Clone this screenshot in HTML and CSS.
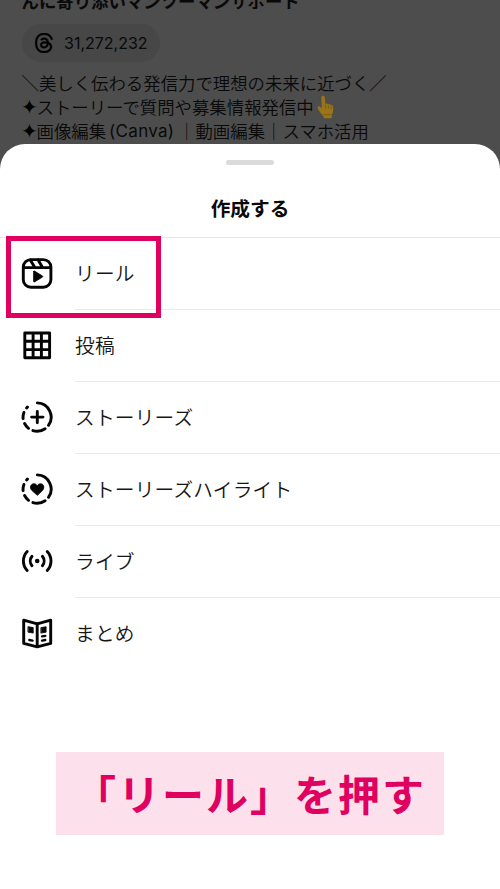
FILE: index.html
```html
<!DOCTYPE html>
<html lang="ja">
<head>
<meta charset="utf-8">
<title>作成する</title>
<link rel="stylesheet" href="styles.css">
</head>
<body>
<main class="screen">
  <section class="profile">
    <div class="headline">んに寄り添いマンツーマンサポート</div>
    <div class="threads-pill">
      <svg class="threads-logo" viewBox="0 0 24 24"><path d="M12.186 24h-.007c-3.581-.024-6.334-1.205-8.184-3.509C2.35 18.44 1.5 15.586 1.472 12.01v-.017c.03-3.579.879-6.43 2.525-8.482C5.845 1.205 8.6.024 12.18 0h.014c2.746.02 5.043.725 6.826 2.098 1.677 1.29 2.858 3.13 3.509 5.467l-2.04.569c-1.104-3.96-3.898-5.984-8.304-6.015-2.91.022-5.11.936-6.54 2.717C4.307 6.504 3.616 8.914 3.589 12c.027 3.086.718 5.496 2.057 7.164 1.43 1.783 3.631 2.698 6.54 2.717 2.623-.02 4.358-.631 5.8-2.045 1.647-1.613 1.618-3.593 1.09-4.798-.31-.71-.873-1.3-1.634-1.75-.192 1.352-.622 2.446-1.284 3.272-.886 1.102-2.14 1.704-3.73 1.79-1.202.065-2.361-.218-3.259-.801-1.063-.689-1.685-1.74-1.752-2.964-.065-1.19.408-2.285 1.33-3.082.88-.76 2.119-1.207 3.583-1.291a13.853 13.853 0 0 1 3.02.142c-.126-.742-.375-1.332-.75-1.757-.513-.586-1.308-.883-2.359-.89h-.029c-.844 0-1.992.232-2.721 1.32L7.734 7.847c.98-1.454 2.568-2.256 4.478-2.256h.044c3.194.02 5.097 1.975 5.287 5.388.108.046.216.094.321.142 1.49.7 2.58 1.761 3.154 3.07.797 1.82.871 4.79-1.548 7.158-1.85 1.81-4.094 2.628-7.277 2.65Zm1.003-11.69c-.242 0-.487.007-.739.021-1.836.103-2.98.946-2.916 2.143.067 1.256 1.452 1.839 2.784 1.767 1.224-.065 2.818-.543 3.086-3.71a10.5 10.5 0 0 0-2.215-.221z"/></svg>
      <span>31,272,232</span>
    </div>
    <div class="bio">
      <div class="bio-line">＼美しく伝わる発信力で理想の未来に近づく／</div>
      <div class="bio-line"><span class="spark">✦</span>ストーリーで質問や募集情報発信中<svg class="finger" viewBox="0 0 17 24"><path d="M4.4 2.6C4.4.4 7.6.2 7.8 2.5L8.3 9c1-.6 2.2-.5 2.900.3 1-.5 2.100-.2 2.600.7 1.100-.3 2.300.4 2.300 1.800v4c0 2-1 3-1.300 4.200v2.100c0 .8-.5 1.200-1.300 1.200H8c-.9 0-1.300-.5-1.400-1.300C6.200 19.700 1.900 17 .7 13.300c-.5-1.700 1.500-2.700 2.700-1.300l1.300 1.500z" fill="#9a741a"/><path d="M8.300 9.200l.4 4.300M11.200 9.600l.3 4M13.900 10.500l.1 3.200M6.600 19.700h8" stroke="#7a5812" stroke-width=".8" fill="none"/></svg></div>
      <div class="bio-line"><span class="spark">✦</span>画像編集<span class="latin">(Canva)</span>｜動画編集｜スマホ活用</div>
    </div>
  </section>

  <section class="sheet">
    <div class="grabber"></div>
    <h1 class="sheet-title">作成する</h1>
    <ul class="menu">
      <li class="item">
        <svg class="icon" viewBox="0 0 32 32"><rect x="2.300" y="2.600" width="27.600" height="27.600" rx="7.500"/><path d="M2.500 10.600h27M9.300 3l4.400 7.300M17 2.800l4.400 7.500"/><path class="solid" d="M12.600 14.600v9.800c0 .5.500.8.900.5l8-4.800c.4-.3.400-.8 0-1.100l-8-4.900c-.4-.3-.9 0-.9.500z"/></svg>
        <div class="label">リール</div>
        <div class="focus-frame"></div>
      </li>
      <li class="item">
        <svg class="icon" viewBox="0 0 32 32"><path d="M3.800 4h24.800v24.800H3.800zM12.100 4v24.800M20.400 4v24.800M3.800 12.300h24.800M3.800 20.600h24.800"/></svg>
        <div class="label">投稿</div>
      </li>
      <li class="item">
        <svg class="icon" viewBox="0 0 32 32"><path d="M16.400 1.900A14.200 14.200 0 0 1 27.500 24.300M24.100 27.700A14.200 14.200 0 0 1 11.900 29.600M7.500 27.300A14.200 14.200 0 0 1 3.600 22.500M2.100 17.600A14.200 14.200 0 0 1 2.900 11.400M5.600 7L6.500 6M16.300 10.400v11.400M10.600 16.100h11.400"/></svg>
        <div class="label">ストーリーズ</div>
      </li>
      <li class="item">
        <svg class="icon" viewBox="0 0 32 32"><path d="M16.400 1.900A14.200 14.200 0 0 1 27.500 24.300M24.100 27.700A14.200 14.200 0 0 1 11.900 29.600M7.500 27.300A14.200 14.200 0 0 1 3.600 22.500M2.100 17.600A14.200 14.200 0 0 1 2.900 11.400M5.600 7L6.500 6"/><path class="solid" d="M16.200 22.200l-5.200-4.600c-3-3.200-1-6.900 1.800-6.900 1.600 0 2.700.8 3.400 2 .7-1.200 1.800-2 3.400-2 2.800 0 4.800 3.700 1.800 6.900z"/></svg>
        <div class="label">ストーリーズハイライト</div>
      </li>
      <li class="item">
        <svg class="icon" viewBox="0 0 32 32"><path d="M6.200 6.500a13.800 13.800 0 0 0 0 19M26.200 6.500a13.800 13.800 0 0 1 0 19M11 11.300a7.300 7.300 0 0 0 0 9.400M21.400 11.300a7.300 7.300 0 0 1 0 9.400"/><circle class="dot" cx="16.200" cy="16" r="2.300"/></svg>
        <div class="label">ライブ</div>
      </li>
      <li class="item">
        <svg class="icon" viewBox="0 0 32 32"><path d="M2.700 3.200L16.200 6.800l13.500-3.600v23.200L16.200 29.800 2.700 26.400zM16.200 6.800v23"/><path class="thin" d="M8.300 23l3.300.6M21 19.400l3.300-.6M21 23.600l3.300-.6"/><path class="solid" d="M7.300 9.700l4.900.9v5.500l-4.900-.9zM20.200 10.600l4.900-.9v5.500l-4.900.9z"/></svg>
        <div class="label">まとめ</div>
      </li>
    </ul>
    <div class="caption">「リール」を押す</div>
  </section>
</main>
</body>
</html>
```

FILE: styles.css
```css
* { box-sizing: border-box; }

body {
  margin: 0;
  background: #4d4d4d;
  font-family: "Noto Sans CJK JP", sans-serif;
}

.screen {
  display: flex;
  flex-direction: column;
  width: 500px;
  height: 889px;
  overflow: hidden;
  background: #4d4d4d;
}

.profile {
  flex: 0 0 143.500px;
  padding-left: 21.500px;
  color: #090909;
  white-space: nowrap;
}

.headline {
  height: 24px;
  margin-top: -11px;
  font-size: 17.400px;
  font-weight: 700;
  line-height: 24px;
}

.threads-pill {
  display: flex;
  align-items: center;
  gap: 10px;
  width: 138px;
  height: 37.500px;
  margin-top: 11px;
  padding-left: 12.500px;
  border-radius: 19px;
  background: #474747;
  font-family: Inter, sans-serif;
  font-size: 16px;
}

.threads-logo { width: 20px; height: 20px; fill: #000; stroke: #000; stroke-width: .5; }

.bio {
  margin-top: 9.500px;
  font-family: "Noto Sans CJK JP DemiLight", "Noto Sans CJK JP", sans-serif;
  font-weight: 350;
}

.bio-line {
  display: flex;
  align-items: center;
  height: 24px;
  font-size: 17.400px;
  line-height: 24px;
}

.spark {
  width: 15px;
  margin-left: -1px;
  margin-right: 1px;
  font-family: "DejaVu Sans", sans-serif;
  font-size: 20px;
  color: #000;
}

.finger { width: 17px; height: 24px; margin-left: 3px; }
.latin { width: 72px; padding-left: 3px; font-family: Inter, sans-serif; font-size: 17px; font-weight: 400; letter-spacing: .3px; }

.sheet {
  flex: 1;
  display: flex;
  flex-direction: column;
  align-items: center;
  border-radius: 25px 25px 0 0;
  background: #fff;
}

.grabber {
  width: 48px;
  height: 5.500px;
  margin-top: 16px;
  border-radius: 3px;
  background: #dbdbdb;
}

.sheet-title {
  height: 72px;
  margin: 0;
  padding-top: 28px;
  color: #0a0a0a;
  font-size: 19.700px;
  font-weight: 700;
  line-height: 30px;
}

.menu {
  width: 500px;
  margin: 0;
  padding: 0;
  border-top: 1px solid #e4e4e4;
  list-style: none;
}

.item {
  position: relative;
  display: flex;
  align-items: center;
  height: 72px;
  padding-left: 21px;
}

.icon {
  width: 32px;
  height: 32px;
  margin: 0 22px 2px 0;
  fill: none;
  stroke: #050505;
  stroke-width: 2.900;
  stroke-linejoin: round;
  stroke-linecap: round;
}

.solid { fill: #050505; stroke-width: .8; }
.thin { stroke-width: 2.300; }
.dot { fill: #050505; stroke: none; }

.label {
  flex: 1;
  height: 72px;
  border-bottom: 1px solid #ebebeb;
  color: #161616;
  font-family: "Noto Sans CJK JP DemiLight", "Noto Sans CJK JP", sans-serif;
  font-weight: 350;
  font-size: 19.700px;
  letter-spacing: .2px;
  line-height: 69px;
}

.item:last-child .label { border-bottom: 0; }

.focus-frame {
  position: absolute;
  top: -2px;
  left: 6px;
  width: 155px;
  height: 82px;
  border: 5.500px solid #df0060;
}

.caption {
  width: 388px;
  height: 83px;
  margin-top: 82px;
  padding-left: 18px;
  background: #fce0eb;
  color: #df0060;
  font-size: 42px;
  font-weight: 700;
  letter-spacing: 2px;
  line-height: 82px;
  white-space: nowrap;
}
```
